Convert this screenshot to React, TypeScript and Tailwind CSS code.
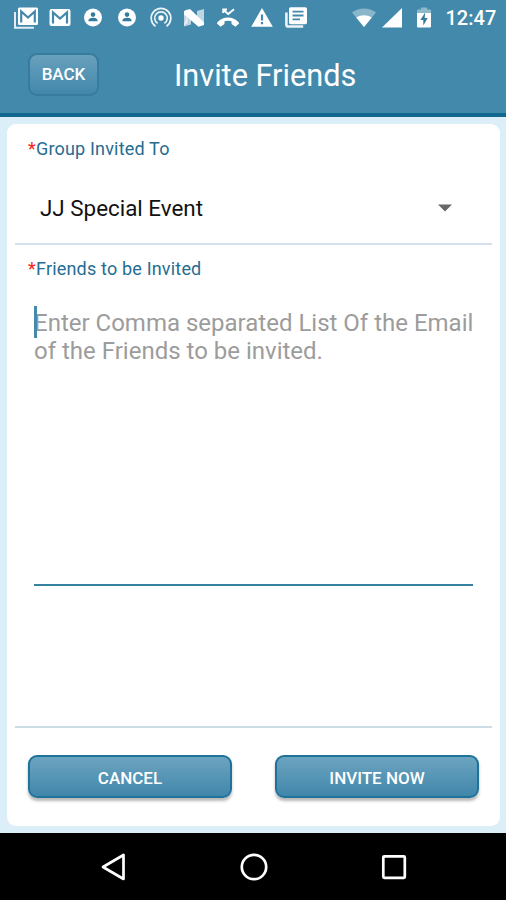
import React from "react";

function Icon({ children }: { children: React.ReactNode }) {
  return (
    <svg width="24" height="24" viewBox="0 0 24 24" fill="none" className="shrink-0">
      {children}
    </svg>
  );
}

function Person() {
  return (
    <Icon>
      <circle cx="12" cy="11.5" r="9" fill="#fff" />
      <circle cx="12" cy="8.6" r="2.3" fill="#357b9e" />
      <path d="M7.5 15.2v-1c0-1.7 2.8-2.5 4.5-2.5s4.500.8 4.500 2.500v1z" fill="#357b9e" />
    </Icon>
  );
}

function StatusBar() {
  return (
    <div className="flex h-[35px] items-center pl-[14px] text-white">
      <div className="flex gap-[9.7px]">
        <Icon>
          <path d="M1 6v15.7h19" stroke="#fff" strokeWidth="2" strokeOpacity=".85" />
          <rect x="4" y="1.5" width="20" height="17.5" rx="1.5" fill="#fff" />
          <path d="M7.2 16.5V5.5l6.800 6 6.800-6v11" stroke="#4389ab" strokeWidth="2.2" />
        </Icon>
        <Icon>
          <rect x="1.5" y="3" width="21" height="17" rx="2" fill="#fff" />
          <path d="M5 17.5V6.5l7 6 7-6v11" stroke="#4389ab" strokeWidth="2.2" />
        </Icon>
        <Person />
        <Person />
        <Icon>
          <g stroke="#fff" strokeWidth="1.7" strokeOpacity=".9">
            <path d="M6.5 20.2a9.800 9.800 0 1 1 11 0" />
            <path d="M8.6 17.4a6.300 6.300 0 1 1 6.800 0" />
          </g>
          <circle cx="12" cy="12" r="2.700" fill="#fff" />
        </Icon>
        <Icon>
          <path d="M2 5.5L5.500 3v14L2 19.500z" fill="#fff" fillOpacity=".65" />
          <path d="M5.5 9L9 12v6.500L2 20.500v-2z" fill="#fff" fillOpacity=".65" />
          <path d="M15 5l7-2v15l-4 2-3-7z" fill="#fff" fillOpacity=".65" />
          <path d="M2 5L8 3l14 13.500v2.500l-5.500 1.700L2 8.500z" fill="#fff" />
        </Icon>
        <Icon>
          <path d="M7.500 4l4.700 4L18 3.300M7.200 7V3.500H11" stroke="#fff" strokeWidth="1.9" />
          <path d="M1.2 16.4C7 10 17 10 22.8 16.4c.4.4.4.9 0 1.3L20 20.2c-.4.4-.9.4-1.3 0a12 12 0 0 0-2.6-1.800c-.4-.2-.6-.5-.6-.9v-2.200c-2.3-.7-4.7-.7-7 0v2.200c0 .4-.2.7-.6.9A12 12 0 0 0 5.3 20.2c-.4.4-.9.4-1.3 0l-2.800-2.500c-.4-.4-.4-.9 0-1.300z" fill="#fff" />
        </Icon>
        <Icon>
          <path d="M12 2L22.8 20.8H1.2z" fill="#fff" />
          <path d="M10.9 8.5h2.200v6h-2.200zM10.9 16h2.200v2.200h-2.200z" fill="#4389ab" />
        </Icon>
        <Icon>
          <path d="M2.4 6.5v12.200a1.800 1.800 0 0 0 1.800 1.800h15" stroke="#fff" strokeWidth="2.6" strokeOpacity=".9" />
          <rect x="5" y="1.2" width="18" height="17" rx="1.6" fill="#fff" />
          <path d="M8.5 5.7h11M8.5 9.5h11M8.5 13.3h7.500" stroke="#4389ab" strokeWidth="1.8" />
        </Icon>
      </div>
      <div className="ml-[43px] flex items-center">
        <svg width="26" height="20" viewBox="0 0 26 20">
          <path d="M1 4.5C8-.8 18-.8 25 4.5L13 19z" fill="#fff" fillOpacity=".38" />
          <path d="M5.2 9.6C10.3 6.4 15.7 6.4 20.8 9.6L13 19z" fill="#fff" />
        </svg>
        <svg width="20" height="20" viewBox="0 0 20 20" className="ml-[5px]">
          <path d="M0 19.5L20 0v19.5z" fill="#fff" />
        </svg>
        <svg width="14" height="21" viewBox="0 0 14 21" className="ml-[15px]">
          <path d="M0 6V3.5a1 1 0 0 1 1-1h2.800V.5h6.400v2H13a1 1 0 0 1 1 1V6z" fill="#fff" fillOpacity=".4" />
          <path d="M0 6h14v13.3a1.200 1.200 0 0 1-1.200 1.200H1.200A1.200 1.200 0 0 1 0 19.300z" fill="#fff" />
          <path d="M8.2 5.5L3.300 13h3v5.500L10.700 11h-3z" fill="#357b9e" />
        </svg>
      </div>
      <span className="ml-[15px] text-[20px] leading-none font-medium whitespace-nowrap">12:47</span>
    </div>
  );
}

function ActionButton({ label }: { label: string }) {
  return (
    <button className="h-[43px] w-[204px] rounded-[9px] border-2 border-[#1f7299] bg-linear-to-b from-[#6ca4c0] to-[#4087ab] pt-[4px] text-[17px] font-medium text-white shadow-[0_3px_3px_rgba(0,0,0,0.28)]">
      {label}
    </button>
  );
}

function FieldLabel({ text }: { text: string }) {
  return (
    <div className="flex pl-[13px] text-[18px] leading-[22px] whitespace-nowrap text-[#256d92]">
      <span className="w-[8px] text-[#f52222]">*</span>
      <span className="tracking-[0.18px]">{text}</span>
    </div>
  );
}

export default function App() {
  return (
    <div className="flex h-[900px] w-[506px] flex-col overflow-hidden bg-[#dceef8] font-[Roboto,sans-serif]">
      <header className="h-[117px] shrink-0 border-b-[4px] border-[#10678f] bg-[#4389ab]">
        <StatusBar />
        <div className="flex h-[78px] items-center pl-[28px]">
          <button className="h-[43px] w-[71px] rounded-[9px] border-2 border-[#357c9f] bg-linear-to-b from-[#68a0bc] to-[#4288ab] pt-[2px] text-[17px] font-medium text-white">
            BACK
          </button>
          <h1 className="ml-[75px] pt-[4px] text-[30.7px] leading-none whitespace-nowrap text-white">Invite Friends</h1>
        </div>
      </header>
      <main className="mx-[7px] mt-[7px] flex h-[702px] w-[493px] shrink-0 flex-col rounded-[9px] bg-white px-[8px]">
        <section className="h-[121px] shrink-0 border-b-2 border-[#d4e1ec] pt-[14px]">
          <FieldLabel text="Group Invited To" />
          <div className="mt-[33px] flex items-center justify-between pr-[40px] pl-[25px] text-[22.4px] leading-[30px] text-[#111]">
            <span className="whitespace-nowrap">JJ Special Event</span>
            <svg width="14" height="8" viewBox="0 0 14 8">
              <path d="M0 .5h14l-7 7z" fill="#686868" />
            </svg>
          </div>
        </section>
        <section className="h-[483px] shrink-0 border-b-2 border-[#cddde5] pt-[13px]">
          <FieldLabel text="Friends to be Invited" />
          <div className="mt-[26px] ml-[19px] h-[280px] w-[439px] border-b-2 border-[#34829f] pt-[3px]">
            <p className="relative text-[24px] leading-[28px] whitespace-nowrap text-[#9c9c9c]">
              <span className="absolute top-[-3px] left-0 h-[32px] w-[3px] bg-[#4589ab]" />
              Enter Comma separated List Of the Email
              <br />
              of the Friends to be invited.
            </p>
          </div>
        </section>
        <div className="flex justify-between pt-[27px] pr-[13px] pl-[13px]">
          <ActionButton label="CANCEL" />
          <ActionButton label="INVITE NOW" />
        </div>
      </main>
      <nav className="mt-[7px] flex h-[67px] shrink-0 items-center bg-black pl-[100px]">
        <svg width="28" height="30" viewBox="0 0 28 30" fill="none">
          <path d="M23.5 3v24L3 15z" stroke="#fff" strokeWidth="2.7" strokeLinejoin="round" />
        </svg>
        <svg width="28" height="28" viewBox="0 0 28 28" fill="none" className="ml-[112px]">
          <circle cx="14" cy="14" r="12.2" stroke="#fff" strokeWidth="2.7" />
        </svg>
        <svg width="26" height="26" viewBox="0 0 26 26" fill="none" className="ml-[113px]">
          <rect x="2.3" y="2.3" width="21.5" height="21.5" rx="1" stroke="#fff" strokeWidth="2.7" />
        </svg>
      </nav>
    </div>
  );
}
